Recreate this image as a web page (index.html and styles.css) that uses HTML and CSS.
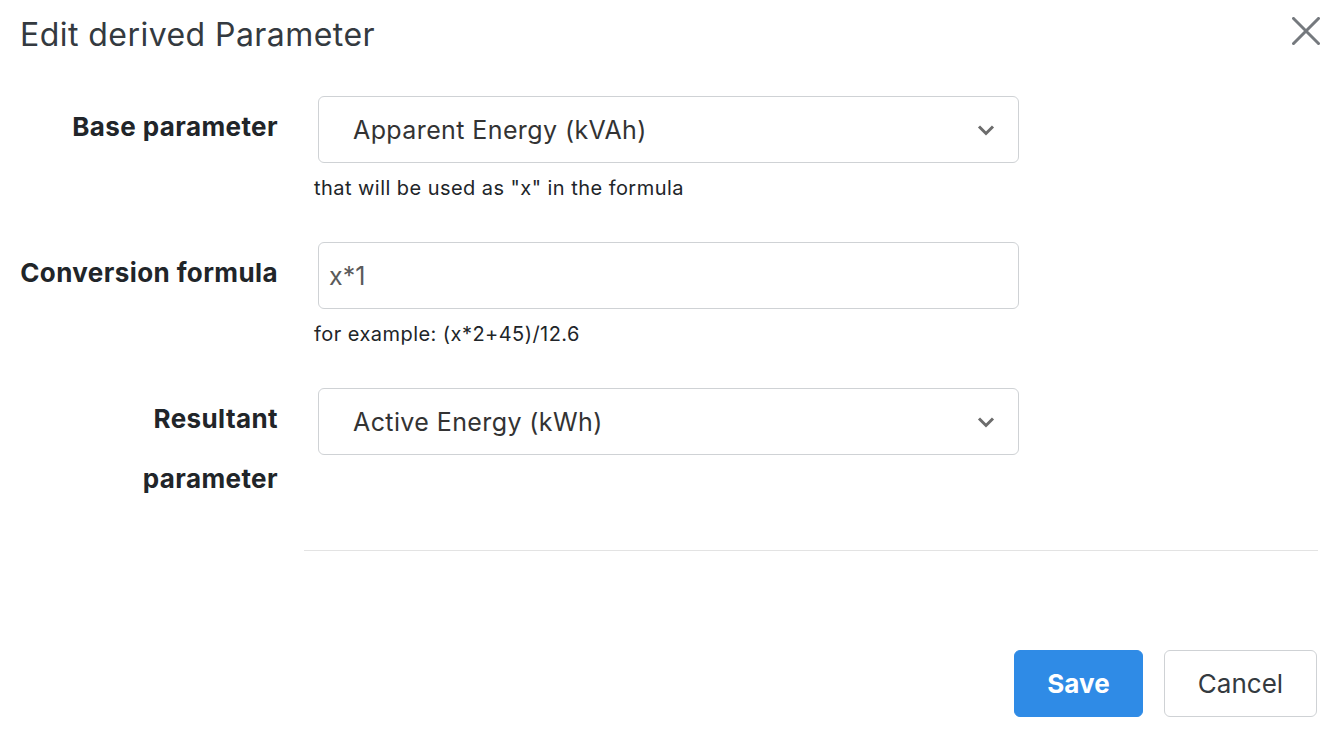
FILE: index.html
```html
<!DOCTYPE html>
<html lang="en">
<head>
<meta charset="utf-8">
<title>Edit derived Parameter</title>
<link rel="stylesheet" href="styles.css">
</head>
<body>
<div class="modal">
  <div class="modal-header">
    <h5 class="modal-title">Edit derived Parameter</h5>
    <button class="close" aria-label="Close">
      <svg width="28" height="28" viewBox="0 0 28 28"><path d="M1.5 1.5 L26.5 26.5 M26.5 1.5 L1.5 26.5" stroke="#75797e" stroke-width="3" stroke-linecap="square" fill="none"/></svg>
    </button>
  </div>
  <div class="modal-body">
    <div class="form-row">
      <label class="form-label">Base parameter</label>
      <div class="form-control-wrap">
        <div class="select-box" role="combobox">
          <span class="select-text">Apparent Energy (kVAh)</span>
          <svg class="chevron" width="18" height="12" viewBox="0 0 18 12"><path d="M2 2.5 L9 9.5 L16 2.5" stroke="#6c6c6c" stroke-width="3" fill="none"/></svg>
        </div>
        <div class="help">that will be used as "x" in the formula</div>
      </div>
    </div>
    <div class="form-row">
      <label class="form-label">Conversion formula</label>
      <div class="form-control-wrap">
        <input class="text-input" type="text" value="x*1">
        <div class="help">for example: (x*2+45)/12.6</div>
      </div>
    </div>
    <div class="form-row last">
      <label class="form-label">Resultant<br>parameter</label>
      <div class="form-control-wrap">
        <div class="select-box" role="combobox">
          <span class="select-text">Active Energy (kWh)</span>
          <svg class="chevron" width="18" height="12" viewBox="0 0 18 12"><path d="M2 2.5 L9 9.5 L16 2.5" stroke="#6c6c6c" stroke-width="3" fill="none"/></svg>
        </div>
      </div>
    </div>
    <hr class="divider">
  </div>
  <div class="modal-footer">
    <button class="btn btn-primary">Save</button>
    <button class="btn btn-secondary">Cancel</button>
  </div>
</div>
</body>
</html>
```

FILE: styles.css
```css
* { box-sizing: border-box; }

body {
  margin: 0;
  background: #ffffff;
  font-family: Inter, "Liberation Sans", sans-serif;
  color: #212529;
}

.modal {
  width: 1336px;
  height: 734px;
}

.modal-header {
  display: flex;
  justify-content: space-between;
  align-items: flex-start;
  padding: 16px 16px 0 20px;
}

.modal-title {
  margin: 0;
  font-size: 32px;
  font-weight: 400;
  line-height: 38px;
  color: #343a40;
  letter-spacing: 0.45px;
}

.close {
  border: 0;
  background: transparent;
  padding: 0;
  margin-top: 1px;
  width: 28px;
  height: 28px;
  cursor: pointer;
}

.modal-body {
  padding-top: 42px;
}

.form-row {
  display: grid;
  grid-template-columns: 278px 701px;
  column-gap: 40px;
  margin-bottom: 42px;
}

.form-row.last {
  margin-bottom: 0;
}

.form-label {
  text-align: right;
  font-weight: 700;
  font-size: 26px;
  line-height: 60px;
  padding-top: 1px;
  color: #212529;
  letter-spacing: 0.4px;
}

.select-box {
  height: 67px;
  border: 1px solid #cfd2d5;
  border-radius: 6px;
  display: flex;
  align-items: center;
  justify-content: space-between;
  padding: 0 23px 0 34px;
  background: #fff;
}

.select-text {
  font-size: 25px;
  color: #333333;
  letter-spacing: 0.4px;
}

.chevron {
  display: block;
}

.text-input {
  display: block;
  width: 100%;
  height: 67px;
  border: 1px solid #cfd2d5;
  border-radius: 6px;
  padding: 0 10px;
  font-family: inherit;
  font-size: 25px;
  color: #5a5a5a;
  outline: none;
}

.help {
  margin-top: 13px;
  margin-left: -4px;
  font-size: 20px;
  line-height: 24px;
  color: #212529;
  letter-spacing: 0.45px;
}

.divider {
  margin: 41px 18px 0 304px;
  border: 0;
  border-top: 1px solid #e3e3e3;
  height: 0;
}

.modal-footer {
  display: flex;
  justify-content: flex-end;
  gap: 21px;
  padding: 99px 19px 0 0;
}

.btn {
  height: 67px;
  border-radius: 6px;
  font-family: inherit;
  font-size: 26px;
  padding: 0 20px;
  cursor: pointer;
}

.btn-primary {
  background: #2f8be6;
  border: 1px solid #2f8be6;
  color: #ffffff;
  font-weight: 700;
  width: 129px;
}

.btn-secondary {
  background: #ffffff;
  border: 1px solid #cfd2d5;
  color: #343a40;
  width: 153px;
}
```
